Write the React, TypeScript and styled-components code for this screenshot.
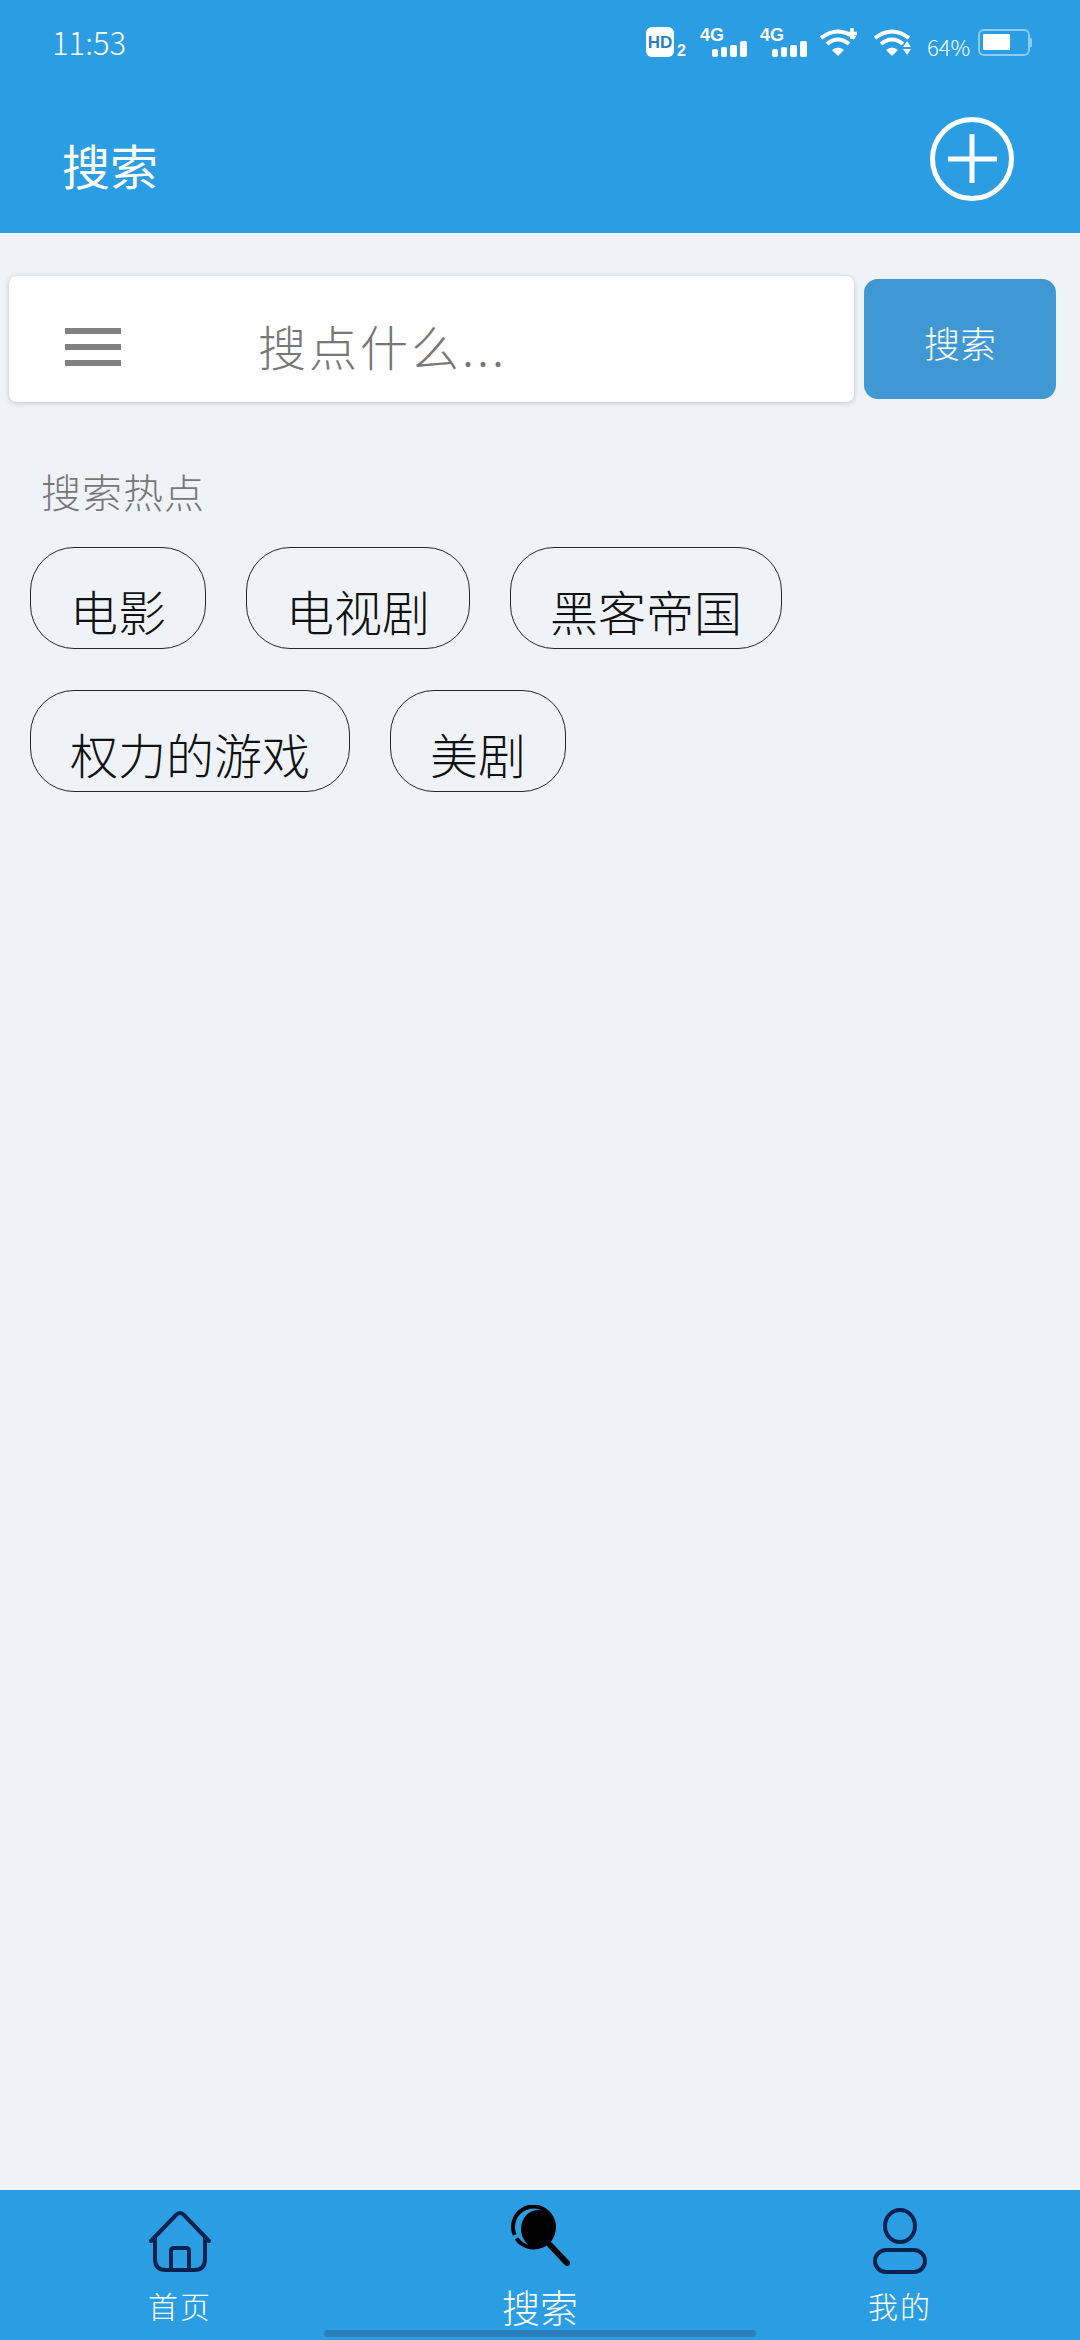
import React from 'react';
import styled, { createGlobalStyle } from 'styled-components';

const GlobalStyle = createGlobalStyle`
  html, body {
    margin: 0;
    padding: 0;
    background: #eff3f8;
  }
  * {
    box-sizing: border-box;
  }
`;

const cjk = `'Noto Sans CJK SC', 'Noto Sans', sans-serif`;

const Page = styled.div`
  position: relative;
  width: 1080px;
  height: 2340px;
  display: flex;
  flex-direction: column;
  background: #eff3f8;
  font-family: ${cjk};
  font-weight: 300;
  overflow: hidden;
`;

const Header = styled.header`
  height: 233px;
  background: #2b9de3;
  color: #fff;
`;

const StatusRow = styled.div`
  height: 85px;
  padding: 27px 48px 0 52px;
  display: flex;
  justify-content: space-between;
  align-items: flex-start;
`;

const Time = styled.span`
  font-size: 31px;
  line-height: 30px;
  font-weight: 200;
`;

const StatusIcons = styled.div`
  display: flex;
  gap: 13px;
  align-items: flex-start;
`;

const TallIcon = styled.svg`
  margin-top: -4px;
`;

const Percent = styled.span`
  width: 45px;
  margin: 6px -4px 0 0;
  padding-left: 3px;
  font-size: 22px;
  line-height: 26px;
  font-weight: 200;
  white-space: nowrap;
`;

const TitleRow = styled.div`
  height: 148px;
  padding: 0 66px 0 62px;
  display: flex;
  justify-content: space-between;
  align-items: center;
`;

const Title = styled.h1`
  margin: 10px 0 0;
  font-size: 48px;
  line-height: 56px;
  font-weight: 400;
`;

const Main = styled.main`
  flex: 1;
  padding: 43px 24px 0 9px;
`;

const SearchRow = styled.div`
  display: flex;
  align-items: center;
  gap: 10px;
`;

const SearchBox = styled.div`
  width: 845px;
  height: 126px;
  padding: 0 56px;
  display: flex;
  align-items: center;
  gap: 137px;
  background: #fff;
  border-radius: 8px;
  box-shadow: 0 1px 5px rgba(60, 70, 90, 0.28);
`;

const MenuIcon = styled.div`
  width: 56px;
  height: 38px;
  margin-top: 16px;
  flex: none;
  display: flex;
  flex-direction: column;
  justify-content: space-between;

  & span {
    display: block;
    height: 6px;
    background: #808080;
  }
`;

const Placeholder = styled.span`
  padding-top: 12px;
  font-size: 48px;
  line-height: 56px;
  font-weight: 200;
  letter-spacing: 3px;
  color: #777;
`;

const SearchButton = styled.button`
  width: 192px;
  height: 120px;
  padding: 6px 0 0;
  border: 0;
  border-radius: 14px;
  background: #3f97d3;
  color: #fff;
  font-family: ${cjk};
  font-size: 36px;
  font-weight: 300;
`;

const SectionLabel = styled.div`
  margin: 65px 0 0 32px;
  font-size: 40px;
  line-height: 48px;
  font-weight: 200;
  letter-spacing: 1px;
  color: #777;
`;

const Chips = styled.div`
  margin: 32px 0 0 21px;
  display: flex;
  flex-wrap: wrap;
  gap: 41px 40px;
`;

const Chip = styled.div`
  height: 102px;
  padding: 24px 39px 0;
  display: flex;
  align-items: center;
  border: 1px solid #22262b;
  border-radius: 44px;
  font-size: 48px;
  line-height: 56px;
  font-weight: 300;
  color: #111;
`;

const Nav = styled.nav`
  height: 150px;
  padding-top: 15px;
  display: grid;
  grid-template-columns: repeat(3, 1fr);
  background: #2b9de3;
`;

const NavItem = styled.div`
  display: flex;
  flex-direction: column;
  align-items: center;
`;

const NavLabel = styled.span<{ $active?: boolean }>`
  height: 50px;
  margin-top: 5px;
  display: flex;
  align-items: center;
  color: #fff;
  font-size: ${({ $active }) => ($active ? '38px' : '30px')};
  letter-spacing: ${({ $active }) => ($active ? '0' : '2px')};
  font-weight: 300;
`;

const HomeIndicator = styled.div`
  position: absolute;
  left: 324px;
  bottom: 3px;
  width: 432px;
  height: 7px;
  border-radius: 4px;
  background: #2a7fbb;
`;

const HdIcon = () => (
  <svg width="41" height="34" viewBox="0 0 41 34">
    <rect width="28" height="30" rx="6" fill="#fff" />
    <text x="14" y="21" textAnchor="middle" fontFamily="Liberation Sans" fontWeight="700" fontSize="17" fill="#2b7fc0">
      HD
    </text>
    <text x="31" y="29" fontFamily="Liberation Sans" fontWeight="700" fontSize="16" fill="#fff">
      2
    </text>
  </svg>
);

const SignalIcon = () => (
  <TallIcon width="47" height="34" viewBox="0 -4 47 34">
    <text x="0" y="14" fontFamily="Liberation Sans" fontWeight="700" fontSize="18" fill="#fff">
      4G
    </text>
    <rect x="12" y="22" width="6" height="8" rx="2" fill="#fff" />
    <rect x="21" y="20" width="6" height="10" rx="2" fill="#fff" />
    <rect x="30" y="18" width="7" height="12" rx="2" fill="#fff" />
    <rect x="40" y="14" width="7" height="16" rx="2" fill="#fff" />
  </TallIcon>
);

const WifiArcs = () => (
  <g fill="none" stroke="#fff" strokeWidth="4">
    <path d="M1 11 Q18 -2 35 11" />
    <path d="M7 17 Q18 8 29 17" />
    <path d="M12 23 L18 29 L24 23 Q18 18 12 23 Z" fill="#fff" stroke="none" />
  </g>
);

const WifiPlusIcon = () => (
  <svg width="37" height="30" viewBox="0 0 37 30">
    <WifiArcs />
    <path d="M32 1 V12 M26.5 6.5 H37" stroke="#fff" strokeWidth="3.5" />
  </svg>
);

const WifiArrowsIcon = () => (
  <svg width="41" height="30" viewBox="-4 0 41 30">
    <WifiArcs />
    <path d="M33 14 L37 20 H29 Z M29 22 H37 L33 28 Z" fill="#fff" />
  </svg>
);

const BatteryIcon = () => (
  <svg width="54" height="30" viewBox="0 0 54 30">
    <rect x="1" y="3" width="50" height="25" rx="5" fill="none" stroke="#8fcbf2" strokeWidth="2" />
    <rect x="5" y="7" width="27" height="16" rx="1" fill="#fff" />
    <rect x="52" y="11" width="2" height="9" rx="1" fill="#8fcbf2" />
  </svg>
);

const PlusIcon = () => (
  <svg width="84" height="84" viewBox="0 0 84 84">
    <circle cx="42" cy="42" r="39.5" fill="none" stroke="#fff" strokeWidth="5" />
    <path d="M42 17 V66 M18 42 H67" stroke="#fff" strokeWidth="5" />
  </svg>
);

const HomeIcon = () => (
  <svg width="70" height="70" viewBox="0 0 70 70" fill="none" stroke="#06234f" strokeWidth="4" strokeLinecap="round" strokeLinejoin="round">
    <path d="M6 36 L31 10 Q35 6 39 10 L64 36" />
    <path d="M10 32 V54 Q10 65 21 65 H49 Q60 65 60 54 V32" />
    <path d="M26 65 V46 Q26 43 29 43 H41 Q44 43 44 46 V65" />
  </svg>
);

const SearchIcon = () => (
  <svg width="70" height="70" viewBox="0 0 70 70" fill="none" stroke="#000" strokeLinecap="round">
    <circle cx="28.5" cy="22" r="20.5" strokeWidth="4" strokeLinecap="butt" strokeDasharray="124 4.8" transform="rotate(157 28.5 22)" />
    <ellipse cx="33" cy="24" rx="17" ry="19" fill="#000" stroke="none" />
    <path d="M45 40 L62 58" strokeWidth="6" />
  </svg>
);

const PersonIcon = () => (
  <svg width="70" height="70" viewBox="0 0 70 70" fill="none" stroke="#06234f" strokeWidth="4">
    <ellipse cx="35" cy="21" rx="15" ry="16" />
    <rect x="10" y="45" width="50" height="22" rx="11" />
  </svg>
);

const hotWords = ['电影', '电视剧', '黑客帝国', '权力的游戏', '美剧'];

function App() {
  return (
    <Page lang="zh-CN">
      <GlobalStyle />
      <Header>
        <StatusRow>
          <Time>11:53</Time>
          <StatusIcons>
            <HdIcon />
            <SignalIcon />
            <SignalIcon />
            <WifiPlusIcon />
            <WifiArrowsIcon />
            <Percent>64%</Percent>
            <BatteryIcon />
          </StatusIcons>
        </StatusRow>
        <TitleRow>
          <Title>搜索</Title>
          <PlusIcon />
        </TitleRow>
      </Header>
      <Main>
        <SearchRow>
          <SearchBox>
            <MenuIcon>
              <span />
              <span />
              <span />
            </MenuIcon>
            <Placeholder>搜点什么...</Placeholder>
          </SearchBox>
          <SearchButton>搜索</SearchButton>
        </SearchRow>
        <SectionLabel>搜索热点</SectionLabel>
        <Chips>
          {hotWords.map(word => (
            <Chip key={word}>{word}</Chip>
          ))}
        </Chips>
      </Main>
      <Nav>
        <NavItem>
          <HomeIcon />
          <NavLabel>首页</NavLabel>
        </NavItem>
        <NavItem>
          <SearchIcon />
          <NavLabel $active>搜索</NavLabel>
        </NavItem>
        <NavItem>
          <PersonIcon />
          <NavLabel>我的</NavLabel>
        </NavItem>
      </Nav>
      <HomeIndicator />
    </Page>
  );
}

export default App;
